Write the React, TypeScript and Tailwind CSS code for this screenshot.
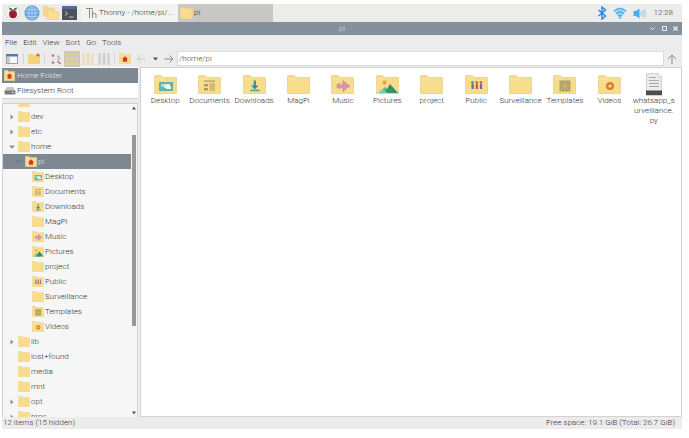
import { useState } from "react";

type Kind =
  | "plain"
  | "desktop"
  | "documents"
  | "downloads"
  | "music"
  | "pictures"
  | "public"
  | "templates"
  | "videos"
  | "home";

const userFolders: { name: string; kind: Kind }[] = [
  { name: "Desktop", kind: "desktop" },
  { name: "Documents", kind: "documents" },
  { name: "Downloads", kind: "downloads" },
  { name: "MagPi", kind: "plain" },
  { name: "Music", kind: "music" },
  { name: "Pictures", kind: "pictures" },
  { name: "project", kind: "plain" },
  { name: "Public", kind: "public" },
  { name: "Surveillance", kind: "plain" },
  { name: "Templates", kind: "templates" },
  { name: "Videos", kind: "videos" },
];

const menus = ["File", "Edit", "View", "Sort", "Go", "Tools"];

// Small drawing on the front of a folder, on a 23x19 grid
const Emblem = ({ kind }: { kind: Kind }) => {
  switch (kind) {
    case "desktop":
      return (
        <>
          <rect x="5" y="7" width="14" height="9" fill="#5fb6a8" />
          <rect x="7" y="9" width="4" height="3" fill="#a5dcd0" />
          <rect x="10" y="9" width="6" height="4" fill="#d8f0ea" />
          <rect x="12" y="11" width="5" height="3" fill="#f2fbf8" />
        </>
      );
    case "documents":
      return (
        <g fill="#a99a68">
          <rect x="6" y="5.5" width="11" height="1.2" />
          <rect x="6" y="9" width="4" height="2.4" />
          <rect x="6" y="13" width="4" height="2.4" />
          <rect x="11.5" y="8.5" width="5.5" height="1" />
          <rect x="11.5" y="10.5" width="5.5" height="1" />
          <rect x="11.5" y="12.5" width="5.5" height="1" />
          <rect x="11.5" y="14.5" width="5.5" height="1" />
        </g>
      );
    case "downloads":
      return (
        <>
          <path d="M10.7 5.5h2.2v5h2.6l-3.7 4-3.7-4h2.6z" fill="#348f9e" />
          <rect x="7.5" y="14.6" width="9" height="1.6" fill="#4fa783" />
        </>
      );
    case "music":
      return (
        <path
          d="M6.5 9v4M8.5 8v6M10.5 9.5v3.5M12.5 5.5v11M14.5 7v8M16.5 9v4M18 10v2"
          stroke="#d28bb2"
          strokeWidth="1.8"
        />
      );
    case "pictures":
      return (
        <>
          <circle cx="8.5" cy="7.5" r="2" fill="#ed9d3c" />
          <path d="M3 18l6-6 6 6z" fill="#55b789" />
          <path d="M8.5 18L14 9l8 9z" fill="#36906b" />
          <path d="M2 18l5-4 4 4z" fill="#7bcda4" />
        </>
      );
    case "public":
      return (
        <>
          <g fill="#5b6f98">
            <circle cx="7.5" cy="7.5" r="1.3" />
            <rect x="6.5" y="9" width="2.2" height="5" />
          </g>
          <g fill="#c1574c">
            <circle cx="11.8" cy="7.5" r="1.3" />
            <rect x="10.7" y="9" width="2.2" height="5" />
          </g>
          <g fill="#8c5f98">
            <circle cx="16" cy="7.5" r="1.3" />
            <rect x="14.9" y="9" width="2.2" height="5" />
          </g>
        </>
      );
    case "templates":
      return (
        <>
          <rect x="6.5" y="5.5" width="11" height="11" fill="#ad9f66" />
          <path
            d="M7 6l10 10M17 6L7 16M12 6v10M7 11h10"
            stroke="#d2bf79"
            strokeWidth="0.8"
          />
        </>
      );
    case "videos":
      return (
        <>
          <circle cx="12" cy="11" r="4" fill="#dc7c31" />
          <circle cx="12" cy="11" r="1.6" fill="#f8e0a0" />
        </>
      );
    case "home":
      return (
        <path d="M11.5 5.5L6 10.500h1.500V15h8v-4.500H17z" fill="#cf3b2b" />
      );
    default:
      return null;
  }
};

const Folder = ({ kind, className }: { kind: Kind; className: string }) => (
  <svg
    viewBox="0 0 23 19"
    preserveAspectRatio="none"
    className={className}
    aria-hidden="true"
  >
    <path
      d="M.5 1.2Q.5.5 1.2.5H7l2 2h13.500v16H.5z"
      fill="#f7dc8b"
      stroke="#ebd08a"
      strokeWidth="0.8"
    />
    <path d="M1 4h8l1.500-1.200" fill="none" stroke="#fbeab4" strokeWidth="0.7" />
    <Emblem kind={kind} />
  </svg>
);

const PythonFile = () => (
  <svg viewBox="0 0 18 23" className="h-[23px] w-[18px]" aria-hidden="true">
    <path d="M1.5.5H13l3.500 3.500v18.500h-15z" fill="#ececec" stroke="#d2d2d2" />
    <path d="M13 .5V4h3.500z" fill="#fff" stroke="#c4c4c4" strokeWidth="0.6" />
    <path
      d="M4 4.500h7M4 7.500h10M4 10.500h10M4 13.500h10"
      stroke="#a9a9a9"
    />
    <rect x="1" y="17.5" width="16" height="4.5" fill="#4d4d4d" />
  </svg>
);

const Drive = () => (
  <svg viewBox="0 0 12 9" className="h-[9px] w-3 shrink-0" aria-hidden="true">
    <path d="M2.500 1h7l2 4H.5z" fill="#c9c9c9" />
    <rect x="0.5" y="4.5" width="11" height="4" rx="1" fill="#7b7b7b" />
    <rect x="8" y="6" width="2" height="1" fill="#d5d5d5" />
  </svg>
);

const Raspberry = () => (
  <svg viewBox="0 0 16 16" className="size-4" aria-hidden="true">
    <circle cx="8" cy="8" r="7.3" fill="#f3f3f2" stroke="#dcdcda" />
    <path
      d="M8 5Q6.500 2 3.800 2.800q.5 2.700 3.200 3zM8 5q1.500-3 4.200-2.200-.5 2.700-3.200 3z"
      fill="#4c7c3a"
    />
    <circle cx="8" cy="9.2" r="4" fill="#a3203f" />
    <path
      d="M5.500 7.500l2 2M10.500 7.500l-2 2M8 9.500v3"
      stroke="#5e1529"
      strokeWidth="0.9"
    />
  </svg>
);

const Globe = () => (
  <svg viewBox="0 0 16 16" className="size-4" aria-hidden="true">
    <circle cx="8" cy="8" r="7.2" fill="#6ba7de" />
    <g fill="none" stroke="#b5d7f3" strokeWidth="0.8">
      <ellipse cx="8" cy="8" rx="3.3" ry="7" />
      <path d="M8 1v14M1 8h14M2.200 4.500h11.600M2.200 11.500h11.600" />
    </g>
    <circle cx="8" cy="8" r="7.2" fill="none" stroke="#5793ce" strokeWidth="0.7" />
  </svg>
);

const FolderPair = () => (
  <svg viewBox="0 0 16 14" className="h-[14px] w-4" aria-hidden="true">
    <path
      d="M.5.500h4l1 1.500h6v8H.5z"
      fill="#f5d98b"
      stroke="#e8cb80"
      strokeWidth="0.6"
    />
    <path
      d="M4 4h4l1 1.500h6.500v8H4z"
      fill="#f9df92"
      stroke="#e8cb80"
      strokeWidth="0.6"
    />
  </svg>
);

const Terminal = () => (
  <svg viewBox="0 0 15 14" className="h-[14px] w-[15px]" aria-hidden="true">
    <rect width="15" height="14" rx="0.5" fill="#4a515c" />
    <rect width="15" height="3" fill="#4e6f9f" />
    <path
      d="M3 5.500l2.500 2L3 9.500M7 11h4.500"
      fill="none"
      stroke="#cfd3d8"
      strokeWidth="0.9"
    />
  </svg>
);

const Bluetooth = () => (
  <svg viewBox="0 0 10 14" className="h-[14px] w-[10px]" aria-hidden="true">
    <path
      d="M1.500 4l7 6L5 13V1l3.500 3-7 6"
      fill="none"
      stroke="#2b8be3"
      strokeWidth="1.5"
    />
  </svg>
);

const Wifi = () => (
  <svg viewBox="0 0 14 12" className="h-3 w-[14px]" aria-hidden="true">
    <path d="M.5 3.500Q7-2 13.500 3.500L7 11.500z" fill="#a9dbf6" />
    <g fill="none" stroke="#52b5ec" strokeWidth="1.5">
      <path d="M1 4.200q6-5.500 12 0" />
      <path d="M3 6.700q4-3.600 8 0" />
      <path d="M5 9q2-1.700 4 0" />
    </g>
    <circle cx="7" cy="10.8" r="1.1" fill="#52b5ec" />
  </svg>
);

const Speaker = () => (
  <svg viewBox="0 0 13 11" className="h-[11px] w-[13px]" aria-hidden="true">
    <path d="M.5 3H3L6.500.5v10L3 8H.5z" fill="#45aeee" />
    <path
      d="M8 3.500v4M9.800 2.200q1 3.300 0 6.600M11.600 1.200q1.400 4.300 0 8.600"
      fill="none"
      stroke="#8bccf2"
    />
  </svg>
);

const Divider = () => <span className="h-[11px] w-px bg-[#d6d6d6]" />;

const Columns = ({ color }: { color: string }) => (
  <svg viewBox="0 0 12 12" className="h-3 w-3" fill={color} aria-hidden="true">
    <path d="M.5 0h2v12h-2zM5 0h2v12H5zM9.500 0h2v12h-2z" />
    <path d="M3 0h.7v12H3zM7.500 0h.7v12h-.7z" opacity="0.5" />
  </svg>
);

const toolButton = "flex h-4 w-4 items-center justify-center";

const Toolbar = () => {
  const [path, setPath] = useState("/home/pi");
  return (
    <div className="flex h-[17px] shrink-0 items-center gap-0 pr-0.5 pl-[2px]">
      <button className={toolButton} aria-label="New window">
        <svg viewBox="0 0 12 10" className="h-[10px] w-3">
          <rect x="0.5" y="0.5" width="11" height="9" fill="#f8f8f8" stroke="#9aa4b1" />
          <rect width="12" height="2.5" fill="#5a78a6" />
          <rect x="1" y="3" width="3" height="6" fill="#c3cbd4" />
        </svg>
      </button>
      <span className="w-[3px]" />
      <Divider />
      <span className="w-0.5" />
      <button className={toolButton} aria-label="New folder">
        <svg viewBox="0 0 12 11" className="h-[11px] w-3">
          <path
            d="M.5 1.500h4l1 1h6v8H.5z"
            fill="#f6d27c"
            stroke="#ecc570"
            strokeWidth="0.6"
          />
          <circle cx="10" cy="2" r="1.6" fill="#e0622e" />
        </svg>
      </button>
      <span className="w-0.5" />
      <Divider />
      <span className="w-[3px]" />
      <button className={toolButton} aria-label="Icon view">
        <svg viewBox="0 0 12 12" className="h-3 w-3">
          <circle cx="3" cy="2.5" r="1.5" fill="#dd7b7b" />
          <circle cx="8.5" cy="3.5" r="1.2" fill="#8fc391" />
          <path d="M1.500 6h9" stroke="#dfd9d4" />
          <circle cx="3" cy="9.5" r="1.5" fill="#b48bc4" />
          <path d="M7.500 8l3 3" stroke="#d4626e" strokeWidth="1.6" />
          <path d="M8 6.500l2-1" stroke="#7ab3d2" strokeWidth="1.2" />
        </svg>
      </button>
      <button
        className="flex h-4 w-4 items-center justify-center bg-[#c9c7c5]"
        aria-label="Thumbnail view"
        aria-pressed="true"
      >
        <svg viewBox="0 0 14 14" className="h-[14px] w-[14px]" fill="#f0d083">
          <path d="M1 1h3v3H1zM5.500 1h3v3h-3zM10 1h3v3h-3zM1 5.500h3v3H1zM5.500 5.500h3v3h-3zM10 5.500h3v3h-3zM1 10h3v3H1zM5.500 10h3v3h-3zM10 10h3v3h-3z" />
        </svg>
      </button>
      <button className={toolButton} aria-label="Compact view">
        <Columns color="#ead9b2" />
      </button>
      <button className={toolButton} aria-label="Detailed list view">
        <Columns color="#cbcbcb" />
      </button>
      <span className="w-0.5" />
      <Divider />
      <span className="w-0.5" />
      <button className={toolButton} aria-label="Home folder">
        <Folder kind="home" className="h-[11px] w-3" />
      </button>
      <button className={toolButton} aria-label="Back">
        <svg viewBox="0 0 10 10" className="size-2.5" fill="none" stroke="#c9c9c9">
          <path d="M9.500 5H1M4.500 1.500L1 5l3.500 3.500" />
        </svg>
      </button>
      <button className="flex h-4 w-3 items-center justify-center" aria-label="History">
        <svg viewBox="0 0 5 4" className="h-1 w-[5px]" fill="#4c4c4c">
          <path d="M0 .5h5L2.500 3.500z" />
        </svg>
      </button>
      <button className={toolButton} aria-label="Forward">
        <svg viewBox="0 0 10 10" className="size-2.5" fill="none" stroke="#858585">
          <path d="M.5 5H9M5.500 1.500L9 5 5.500 8.500" />
        </svg>
      </button>
      <input
        aria-label="Location"
        value={path}
        onChange={(e) => setPath(e.target.value)}
        className="h-[15px] min-w-0 flex-1 border border-[#dcdcdc] bg-white px-px text-[8px] text-[#444] outline-none"
      />
      <button className={toolButton} aria-label="Parent folder">
        <svg viewBox="0 0 10 10" className="size-2.5" fill="none" stroke="#8d8d8d">
          <path d="M5 10V1M1 5l4-4 4 4" />
        </svg>
      </button>
    </div>
  );
};

const Expander = ({ open }: { open?: boolean }) => (
  <svg viewBox="0 0 6 6" className="size-1.5 shrink-0" fill="#8f8f8f" aria-hidden="true">
    {open ? <path d="M0 1.500h6L3 4.800z" /> : <path d="M1.500.5v5L4.500 3z" />}
  </svg>
);

const TreeRow = ({
  name,
  kind = "plain",
  expander,
}: {
  name: string;
  kind?: Kind;
  expander?: "open" | "closed";
}) => (
  <li className="flex h-[15px] items-center gap-[3px] pl-[6px]">
    {expander ? <Expander open={expander === "open"} /> : <span className="w-1.5" />}
    <button className="flex items-center gap-px">
      <Folder kind={kind} className="h-[11px] w-3 shrink-0" />
      <span>{name}</span>
    </button>
  </li>
);

const Sidebar = () => (
  <aside className="flex w-[136px] shrink-0 flex-col leading-[10px]">
    {/* Places */}
    <div className="shrink-0 border-b border-[#d2d2d2] bg-white pt-px">
      <button className="flex h-[15px] w-full items-center gap-[2px] bg-[#7d8893] pl-[2px] text-[#eceef0]">
        <Folder kind="home" className="h-[11px] w-[11px] shrink-0" />
        Home Folder
      </button>
      <button className="flex h-[15px] w-full items-center gap-px pl-[2px]">
        <Drive />
        Filesystem Root
      </button>
    </div>

    {/* Directory tree */}
    <div className="mt-1 flex min-h-0 flex-1 border-t border-l border-[#d2d2d2] bg-[#f6f6f6]">
      <ul className="-mt-2.5 flex-1 overflow-hidden [clip-path:inset(10px_0_0_0)]">
        {/* scrolled so that only the foot of this folder shows */}
        <TreeRow name="" />
        <TreeRow name="dev" expander="closed" />
        <TreeRow name="etc" expander="closed" />
        <TreeRow name="home" expander="open" />
        <li className="flex h-[15px] items-center gap-[3px] bg-[#7d8893] pl-[13px] text-[#eceef0]">
          <svg
            viewBox="0 0 6 6"
            className="size-1.5 shrink-0"
            fill="none"
            stroke="#5f6973"
            aria-hidden="true"
          >
            <path d="M2 1L.5 3M4 1l1.500 2" />
          </svg>
          <button className="flex items-center gap-px">
            <Folder kind="home" className="h-[11px] w-3 shrink-0" />
            <span>pi</span>
          </button>
        </li>
        {userFolders.map((f) => (
          <li key={f.name} className="flex h-[15px] items-center pl-[29px]">
            <button className="flex items-center gap-px">
              <Folder kind={f.kind} className="h-[11px] w-3 shrink-0" />
              <span>{f.name}</span>
            </button>
          </li>
        ))}
        <TreeRow name="lib" expander="closed" />
        <TreeRow name="lost+found" />
        <TreeRow name="media" />
        <TreeRow name="mnt" />
        <TreeRow name="opt" expander="closed" />
        <TreeRow name="proc" expander="closed" />
      </ul>

      {/* Scrollbar */}
      <div className="flex w-[7px] flex-col items-center border-r border-[#d2d2d2] py-0.5">
        <svg viewBox="0 0 4 4" className="size-1 shrink-0" fill="#555">
          <path d="M0 3.500h4L2 .5z" />
        </svg>
        <span className="h-[8%]" />
        <span className="h-[62%] w-1 bg-[#999]" />
        <span className="flex-1" />
        <svg viewBox="0 0 4 4" className="size-1 shrink-0" fill="#555">
          <path d="M0 .5h4L2 3.500z" />
        </svg>
      </div>
    </div>
  </aside>
);

const FileGrid = () => (
  <main className="ml-[2px] min-w-0 flex-1 overflow-hidden border border-[#d2d2d2] bg-white pt-[5px] pr-[5px] pl-[2px]">
    <div className="grid grid-cols-[repeat(auto-fill,minmax(44px,1fr))] leading-[10px]">
      {userFolders.map((f) => (
        <button key={f.name} className="flex flex-col items-center">
          <span className="flex h-[23px] items-center">
            <Folder kind={f.kind} className="h-[19px] w-[23px]" />
          </span>
          <span className="whitespace-nowrap">{f.name}</span>
        </button>
      ))}
      <button className="flex flex-col items-center">
        <PythonFile />
        <span className="w-[43px]">
          whatsapp_s
          <wbr />
          urveillance.
          <wbr />
          py
        </span>
      </button>
    </div>
  </main>
);

const App = () => {
  return (
    <div className="flex h-screen flex-col bg-white pt-1 pr-[7px] pb-[9px] pl-[2px] font-['Roboto',sans-serif] text-[8px] font-light text-[#333]">
      {/* Taskbar */}
      <header className="flex h-[18px] shrink-0 items-center bg-[#ececeb]">
        <nav className="flex items-center gap-[3px] pl-[3px]">
          <button aria-label="Menu">
            <Raspberry />
          </button>
          <button aria-label="Web browser">
            <Globe />
          </button>
          <button aria-label="File manager">
            <FolderPair />
          </button>
          <button aria-label="Terminal">
            <Terminal />
          </button>
        </nav>
        <button className="ml-1 flex h-full w-[97px] items-center gap-[2px] bg-[#f3f3f2] pl-[5px]">
          <svg
            viewBox="0 0 11 12"
            className="h-3 w-[11px] shrink-0"
            fill="none"
            stroke="#8a8a8a"
            aria-hidden="true"
          >
            <path d="M0 1.500h7M3.500 1.500V11M6.500 3v8M6.500 7.500Q10 5 10 8v3" />
          </svg>
          <span className="whitespace-nowrap">Thonny - /home/pi/...</span>
        </button>
        <button className="flex h-full w-[95px] items-center gap-px bg-[#c9c7c5] pl-[2px]">
          <Folder kind="plain" className="h-3 w-[13px]" />
          pi
        </button>
        <div className="ml-auto flex items-center gap-1.5 pr-[9px]">
          <Bluetooth />
          <Wifi />
          <Speaker />
          <time className="pl-0.5">12:28</time>
        </div>
      </header>

      <div className="flex min-h-0 flex-1 flex-col bg-[#ececec]">
        {/* Title bar */}
        <div className="flex h-[13px] shrink-0 items-center bg-[#84909b] text-[#dde1e4]">
          <span className="w-8" />
          <h1 className="flex-1 text-center">pi</h1>
          <div className="flex w-8 items-center justify-between pr-1">
            <button aria-label="Minimize">
              <svg viewBox="0 0 5 5" className="size-[5px]" fill="none" stroke="#eef0f2">
                <path d="M.5 1.500l2 2 2-2" />
              </svg>
            </button>
            <button aria-label="Maximize">
              <svg viewBox="0 0 5 5" className="size-[5px]" fill="none" stroke="#eef0f2">
                <path d="M.5.500h4v4h-4z" />
              </svg>
            </button>
            <button aria-label="Close">
              <svg
                viewBox="0 0 5 5"
                className="size-[5px]"
                fill="none"
                stroke="#eef0f2"
                strokeWidth="1.3"
              >
                <path d="M.5.500l4 4M4.500.500l-4 4" />
              </svg>
            </button>
          </div>
        </div>

        {/* Menu bar */}
        <nav className="flex h-[15px] shrink-0 items-center gap-1.5 pl-[3px]">
          {menus.map((m) => (
            <button key={m}>{m}</button>
          ))}
        </nav>

        <Toolbar />

        <div className="flex min-h-0 flex-1">
          <Sidebar />
          <FileGrid />
        </div>

        {/* Status bar */}
        <footer className="flex h-3 shrink-0 items-center justify-between pr-[7px] pl-px leading-[10px]">
          <span>12 items (15 hidden)</span>
          <span>Free space: 19.1 GiB (Total: 26.7 GiB)</span>
        </footer>
      </div>
    </div>
  );
};
export default App;
